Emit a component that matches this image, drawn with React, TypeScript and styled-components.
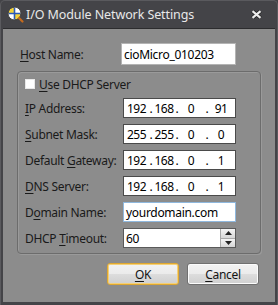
import React from "react";
import styled, { createGlobalStyle } from "styled-components";

const Global = createGlobalStyle`
  html, body { margin: 0; padding: 0; background: #434347; }
  body { font-family: "Noto Sans", "DejaVu Sans", sans-serif; }
  * { box-sizing: border-box; }
`;

const Window = styled.div`
  width: 278px;
  height: 305px;
  background: #444448;
  border-radius: 5px 5px 0 0;
  border: 1px solid #5a5a5e;
  border-bottom: none;
  display: flex;
  flex-direction: column;
  padding: 0 2px 3px 2px;
  overflow: hidden;
`;

const TitleBar = styled.div`
  height: 28px;
  display: flex;
  align-items: center;
  padding: 0 0 0 4px;
  color: #e8e8e8;
  font-size: 12.5px;
  flex-shrink: 0;
  border-bottom: 1px solid #2c2c2e;
`;

const TitleText = styled.span`
  margin-left: 2px;
  flex: 1;
  letter-spacing: -0.1px;
`;

const CloseBox = styled.div`
  display: flex;
  margin-right: 13px;
`;

const Body = styled.div`
  flex: 1;
  background: #8c8c8c;
  padding: 14px 14px 0 14px;
  display: flex;
  flex-direction: column;
  font-size: 12px;
  color: #1a1a1a;
`;

const HostRow = styled.div`
  display: flex;
  align-items: center;
  height: 22px;
  padding-left: 3px;
`;

const Label = styled.label<{ $w: number }>`
  width: ${(p) => p.$w}px;
  flex-shrink: 0;
  white-space: nowrap;
  letter-spacing: -0.3px;
`;

const U = styled.span`
  text-decoration: underline;
  text-underline-offset: 2px;
`;

const TextBox = styled.div<{ $border: string; $w: number; $h: number }>`
  width: ${(p) => p.$w}px;
  height: ${(p) => p.$h}px;
  background: #ffffff;
  border: 1px solid ${(p) => p.$border};
  display: flex;
  align-items: center;
  padding-left: 2px;
  font-size: 12px;
  color: #000;
  white-space: nowrap;
  letter-spacing: -0.3px;
  position: relative;
`;

const Group = styled.div`
  margin-top: 6px;
  width: 244px;
  height: 183px;
  border: 1px solid #6c6c6c;
  border-radius: 4px;
  box-shadow: inset 1px 1px 0 #9a9a9a, 1px 1px 0 #9a9a9a;
  padding: 6px 0 0 6px;
  display: flex;
  flex-direction: column;
`;

const CheckRow = styled.div`
  display: flex;
  align-items: center;
  height: 12px;
  gap: 3px;
`;

const CheckBox = styled.span`
  width: 12px;
  height: 12px;
  background: #fff;
  border: 1px solid #8a8a8a;
  box-shadow: inset 0 0 0 1px #e8e8e8;
`;

const CheckLabel = styled.span`
  letter-spacing: -0.3px;
`;

const Rows = styled.div`
  margin-top: 8px;
  display: flex;
  flex-direction: column;
  gap: 6px;
  padding-left: 1px;
`;

const Row = styled.div`
  display: flex;
  align-items: center;
  height: 20px;
`;

const IpGrid = styled.div`
  display: grid;
  grid-template-columns: 23px 6px 20px 6px 22px 10px 18px;
  align-items: center;
  width: 100%;
  margin-left: -1px;
`;

const Octet = styled.span`
  text-align: center;
  letter-spacing: -0.5px;
`;

const Dot = styled.span`
  display: flex;
  justify-content: center;
  width: 100%;
`;

const Spinner = styled.div`
  position: absolute;
  right: 0;
  top: 0;
  bottom: 0;
  width: 15px;
  display: flex;
  flex-direction: column;
  border-left: 1px solid #a8a8a8;
`;

const SpinBtn = styled.div<{ $up?: boolean }>`
  flex: 1;
  display: flex;
  align-items: center;
  justify-content: center;
  background: linear-gradient(#f4f4f4, #d6d6d6);
  border-bottom: ${(p) => (p.$up ? "1px solid #a8a8a8" : "none")};
`;

const ButtonRow = styled.div`
  margin-top: 9px;
  display: flex;
  justify-content: flex-end;
  gap: 8px;
  padding-right: 2px;
`;

const Button = styled.button<{ $default?: boolean }>`
  width: 72px;
  height: 22px;
  font-family: inherit;
  font-size: 12px;
  color: #141414;
  border-radius: 3px;
  border: 1px solid ${(p) => (p.$default ? "#e0a830" : "#707070")};
  background: linear-gradient(#f2f2f2 0%, #ebebeb 50%, #dddddd 51%, #cfcfcf 100%);
  box-shadow: inset 0 0 0 1px ${(p) => (p.$default ? "#f4d078" : "#fbfbfb")};
  padding: 0;
  letter-spacing: -0.3px;
`;

const Arrow = ({ up }: { up?: boolean }) => (
  <svg width="7" height="4" viewBox="0 0 7 4">
    <path d={up ? "M0 4 L3.5 0 L7 4 Z" : "M0 0 L3.5 4 L7 0 Z"} fill="#222" />
  </svg>
);

const AppIcon = () => (
  <svg width="17" height="17" viewBox="0 0 17 17">
    <circle cx="7.5" cy="7.5" r="6.5" fill="#f2d23a" stroke="#3a3a3a" strokeWidth="1" />
    <path d="M7.5 1 A6.5 6.5 0 0 1 14 7.5 L7.5 7.5 Z" fill="#ffffff" />
    <path d="M7.5 14 A6.5 6.5 0 0 1 1 7.5 L7.5 7.5 Z" fill="#ffffff" />
    <path d="M7.5 1.5 V13.5 M1.5 7.5 H13.5" stroke="#2a5ab8" strokeWidth="1.6" />
    <circle cx="7.5" cy="7.5" r="6.5" fill="none" stroke="#4a4a4a" strokeWidth="1" />
    <path d="M12 12 L15.5 15.5" stroke="#c46a1e" strokeWidth="2.2" strokeLinecap="round" />
  </svg>
);

const CloseIcon = () => (
  <svg width="11" height="9" viewBox="0 0 11 9">
    <path d="M1.5 1.2 L9.5 7.8 M9.5 1.2 L1.5 7.8" stroke="#1e1e1e" strokeWidth="3.6" />
    <path d="M1.5 1.2 L9.5 7.8 M9.5 1.2 L1.5 7.8" stroke="#ececec" strokeWidth="2.2" />
  </svg>
);

const Ip = ({ parts }: { parts: string[] }) => (
  <IpGrid>
    <Octet>{parts[0]}</Octet>
    <Dot>.</Dot>
    <Octet>{parts[1]}</Octet>
    <Dot>.</Dot>
    <Octet>{parts[2]}</Octet>
    <Dot>.</Dot>
    <Octet>{parts[3]}</Octet>
  </IpGrid>
);

const ipRows: { pre: string; u: string; post: string; value: string[] }[] = [
  { pre: "", u: "I", post: "P Address:", value: ["192", "168", "0", "91"] },
  { pre: "", u: "S", post: "ubnet Mask:", value: ["255", "255", "0", "0"] },
  { pre: "Default ", u: "G", post: "ateway:", value: ["192", "168", "0", "1"] },
  { pre: "", u: "D", post: "NS Server:", value: ["192", "168", "0", "1"] },
];

export default function App() {
  return (
    <>
      <Global />
      <Window>
        <TitleBar>
          <AppIcon />
          <TitleText>I/O Module Network Settings</TitleText>
          <CloseBox>
            <CloseIcon />
          </CloseBox>
        </TitleBar>
        <Body>
          <HostRow>
            <Label $w={101}>
              <U>H</U>ost Name:
            </Label>
            <TextBox $border="#b4b4b4" $w={115} $h={22}>
              cioMicro_010203
            </TextBox>
          </HostRow>
          <Group>
            <CheckRow>
              <CheckBox />
              <CheckLabel>
                <U>U</U>se DHCP Server
              </CheckLabel>
            </CheckRow>
            <Rows>
              {ipRows.map((r) => (
                <Row key={r.post}>
                  <Label $w={98}>
                    {r.pre}
                    <U>{r.u}</U>
                    {r.post}
                  </Label>
                  <TextBox $border="#4a4a4a" $w={113} $h={20}>
                    <Ip parts={r.value} />
                  </TextBox>
                </Row>
              ))}
              <Row>
                <Label $w={98}>
                  D<U>o</U>main Name:
                </Label>
                <TextBox $border="#8fb8de" $w={113} $h={20}>
                  yourdomain.com
                </TextBox>
              </Row>
              <Row>
                <Label $w={98}>
                  DHCP <U>T</U>imeout:
                </Label>
                <TextBox $border="#5a5a5a" $w={113} $h={20}>
                  60
                  <Spinner>
                    <SpinBtn $up>
                      <Arrow up />
                    </SpinBtn>
                    <SpinBtn>
                      <Arrow />
                    </SpinBtn>
                  </Spinner>
                </TextBox>
              </Row>
            </Rows>
          </Group>
          <ButtonRow>
            <Button $default>
              <U>O</U>K
            </Button>
            <Button>
              <U>C</U>ancel
            </Button>
          </ButtonRow>
        </Body>
      </Window>
    </>
  );
}
